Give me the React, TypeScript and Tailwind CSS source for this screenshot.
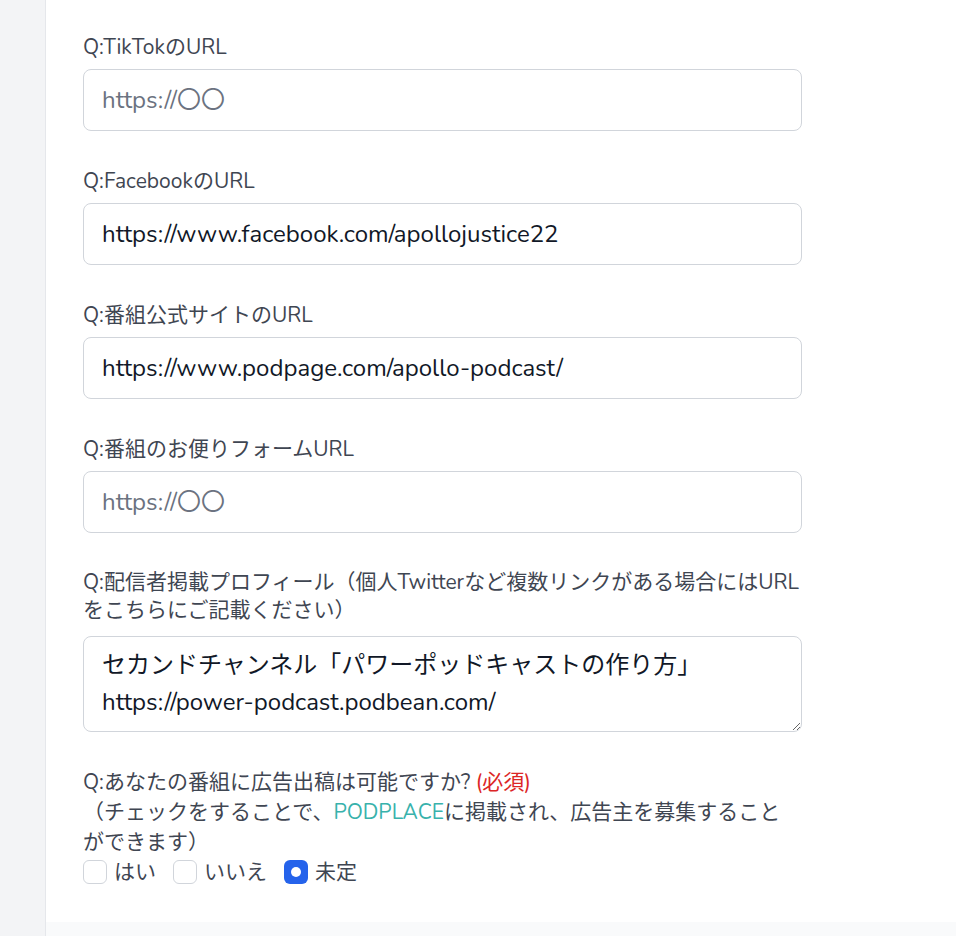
import { useState } from 'react'

const FONT = { fontFamily: 'Nunito, Lato, "Noto Sans CJK JP", sans-serif' }

const URL_FIELDS = [
  { label: 'Q:TikTokのURL', value: '' },
  { label: 'Q:FacebookのURL', value: 'https://www.facebook.com/apollojustice22' },
  { label: 'Q:番組公式サイトのURL', value: 'https://www.podpage.com/apollo-podcast/' },
  { label: 'Q:番組のお便りフォームURL', value: '' },
]

const OPTIONS = ['はい', 'いいえ', '未定']

export default function App() {
  const [ad, setAd] = useState('未定')

  return (
    <div className="min-h-[936px] bg-[#f9fafb] flex" style={FONT}>
      <div className="w-[46px] shrink-0 bg-[#f3f4f6] border-r border-[#e5e7eb]" />
      <div className="flex-1 flex flex-col">
        <main className="bg-white pl-[37px] pt-[33px] h-[922px]">
          <div className="w-[719px] flex flex-col">
            {URL_FIELDS.map(f => (
              <div key={f.label} className="mb-[36px]">
                <label className="block text-[21px] leading-[28px] text-[#3f4652] mb-2">{f.label}</label>
                <input
                  defaultValue={f.value}
                  placeholder="https://〇〇"
                  className="w-full h-[62px] rounded-lg border border-[#d1d5db] px-[18px] text-[24px] text-[#111827] placeholder:text-[#6b7280] outline-none"
                />
              </div>
            ))}

            <div className="mb-[35px] -mt-[1px]">
              <label className="block text-[21px] leading-[28px] text-[#3f4652] mb-[12px]">
                Q:配信者掲載プロフィール（個人Twitterなど複数リンクがある場合にはURL
                <br />
                をこちらにご記載ください）
              </label>
              <textarea
                rows={2}
                defaultValue={'セカンドチャンネル「パワーポッドキャストの作り方」\nhttps://power-podcast.podbean.com/'}
                className="block w-full h-[96px] rounded-lg border border-[#d1d5db] px-[18px] pt-[10px] text-[24px] leading-[37px] text-[#111827] outline-none"
              />
            </div>

            <div className="text-[21px] leading-[30px] text-[#3f4652]">
              <p>
                Q:あなたの番組に広告出稿は可能ですか? <span className="text-[#dc2626]">(必須)</span>
              </p>
              <p>
                （チェックをすることで、<span className="text-[#38b2ac]">PODPLACE</span>に掲載され、広告主を募集すること
                <br />
                ができます）
              </p>
              <div className="flex items-center gap-[17px]">
                {OPTIONS.map(o => (
                  <label key={o} className="flex items-center gap-[7px] cursor-pointer" onClick={() => setAd(o)}>
                    {ad === o ? (
                      <span className="w-6 h-6 rounded-md bg-[#2563eb] flex items-center justify-center">
                        <span className="w-[10px] h-[10px] rounded-full bg-white" />
                      </span>
                    ) : (
                      <span className="w-6 h-6 rounded-md border border-[#d1d5db] bg-white" />
                    )}
                    <span className="text-[#3f4652]">{o}</span>
                  </label>
                ))}
              </div>
            </div>
          </div>
        </main>
      </div>
    </div>
  )
}
